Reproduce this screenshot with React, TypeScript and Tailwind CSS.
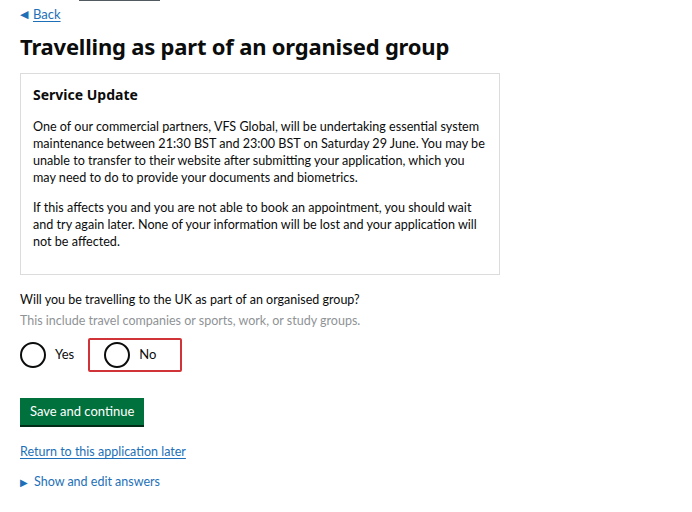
import React from 'react';

const font = { fontFamily: 'Lato, "Noto Sans", Arial, sans-serif' };
const heading = { fontFamily: '"Noto Sans", Arial, sans-serif' };

const Radio: React.FC<{ label: string; highlight?: boolean }> = ({ label, highlight }) => (
  <div
    className={
      highlight
        ? 'flex items-center h-[34px] pl-[14px] pr-[24px] border-2 border-[#d13438] rounded-[2px]'
        : 'flex items-center h-[34px]'
    }
  >
    <span className="w-[26px] h-[26px] rounded-full border-2 border-[#0b0c0c] bg-white" />
    <span className="ml-[9px] text-[13px] text-[#0b0c0c]">{label}</span>
  </div>
);

const App: React.FC = () => {
  return (
    <div className="relative w-[692px] h-[512px] bg-white overflow-hidden" style={font}>
      <div className="absolute left-[79px] top-0 w-[81px] h-[1px] bg-[#505a5f]" />
      <div className="pl-[20px] pt-[5px]">
        <a href="#" className="flex items-center text-[13px] text-[#1d70b8] leading-[18px]">
          <span className="text-[11px] mr-[5px]">◀</span>
          <span className="underline underline-offset-2">Back</span>
        </a>
        <h1 className="mt-[8px] text-[22px] font-bold text-[#0b0c0c] leading-[30px] tracking-[-0.2px]" style={heading}>
          Travelling as part of an organised group
        </h1>
        <div className="mt-[12px] w-[480px] h-[202px] border border-[#dcdcdc] px-[12px] pt-[10px]">
          <h2 className="text-[14px] font-bold text-[#0b0c0c] leading-[22px]" style={heading}>Service Update</h2>
          <p className="mt-[12px] text-[12.6px] leading-[17px] text-[#0b0c0c]">
            One of our commercial partners, VFS Global, will be undertaking essential system maintenance between 21:30 BST and 23:00 BST on Saturday 29 June. You may be unable to transfer to their website after submitting your application, which you may need to do to provide your documents and biometrics.
          </p>
          <p className="mt-[13px] text-[12.6px] leading-[17px] text-[#0b0c0c]">
            If this affects you and you are not able to book an appointment, you should wait and try again later. None of your information will be lost and your application will not be affected.
          </p>
        </div>
        <p className="mt-[15px] text-[12.5px] leading-[20px] text-[#0b0c0c]">
          Will you be travelling to the UK as part of an organised group?
        </p>
        <p className="mt-[1px] text-[12.5px] leading-[20px] text-[#8f9396]">
          This include travel companies or sports, work, or study groups.
        </p>
        <div className="mt-[7px] flex items-center gap-[14px]">
          <Radio label="Yes" />
          <Radio label="No" highlight />
        </div>
        <button className="mt-[26px] h-[27px] px-[10px] bg-[#00703c] text-white text-[13px] shadow-[0_2px_0_#002d18]">
          Save and continue
        </button>
        <div className="mt-[13px]">
          <a href="#" className="text-[12.5px] text-[#1d70b8] underline underline-offset-2 leading-[20px]">
            Return to this application later
          </a>
        </div>
        <div className="mt-[10px] flex items-center text-[12.5px] text-[#1d70b8] leading-[20px]">
          <span className="text-[10px] mr-[6px]">▶</span>
          <span>Show and edit answers</span>
        </div>
      </div>
    </div>
  );
};

export default App;
